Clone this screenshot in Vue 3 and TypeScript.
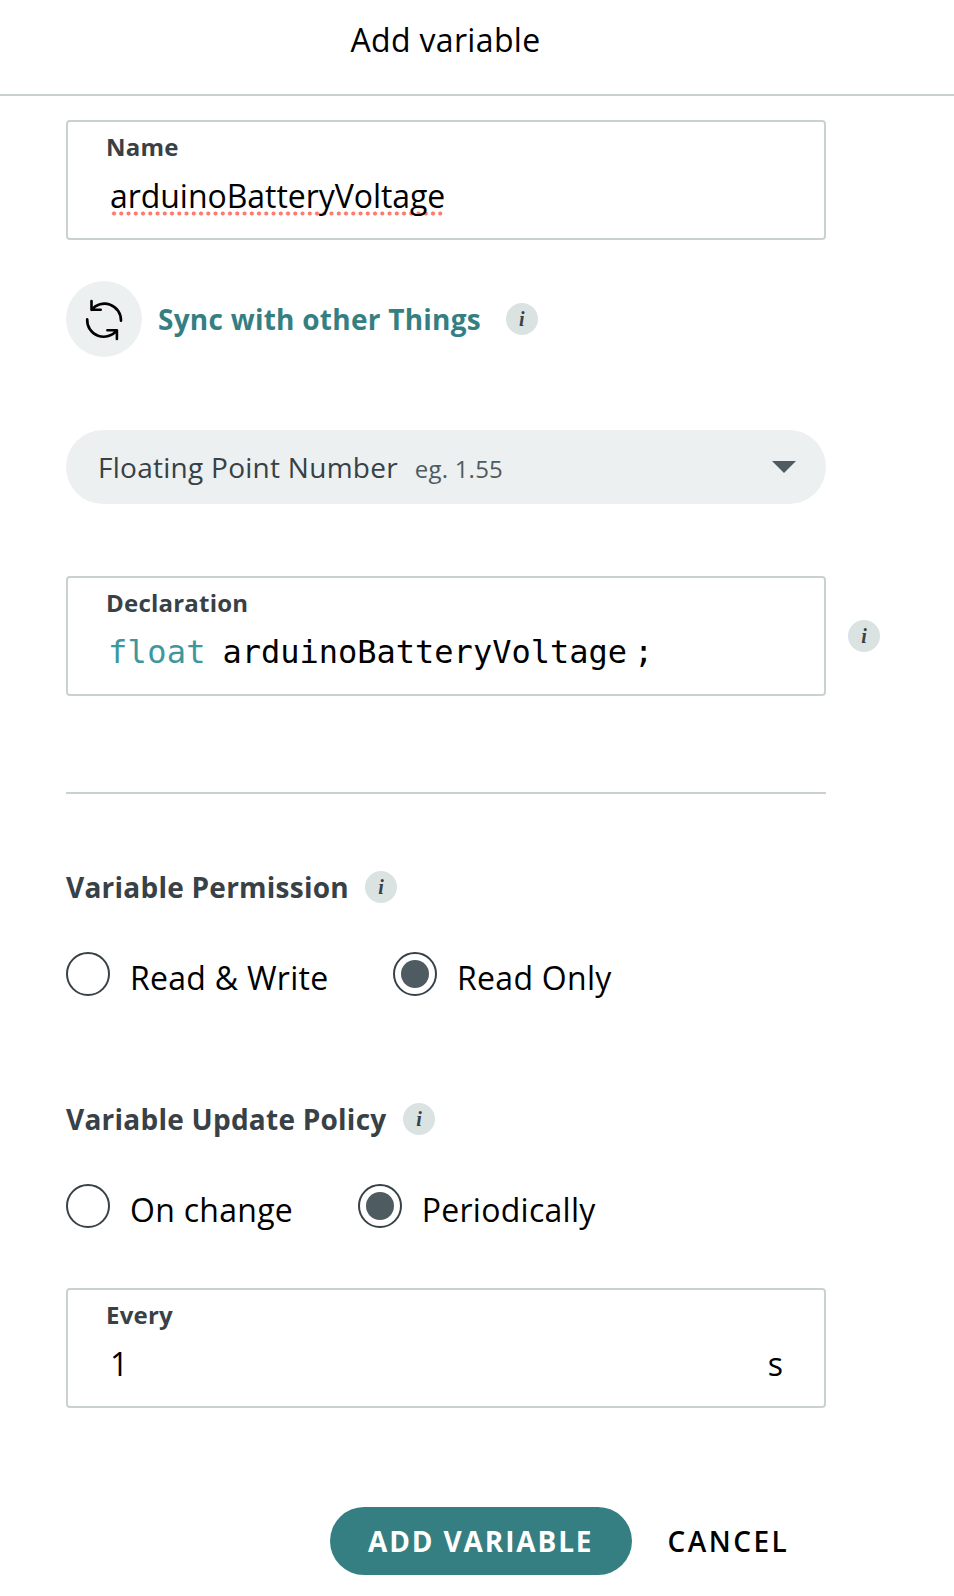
<script setup lang="ts">
import { ref } from 'vue'

interface Option {
  value: string
  label: string
}

const name = ref('arduinoBatteryVoltage')
const every = ref(1)
const permission = ref('ro')
const policy = ref('periodic')

const permissions: Option[] = [
  { value: 'rw', label: 'Read & Write' },
  { value: 'ro', label: 'Read Only' },
]
const policies: Option[] = [
  { value: 'change', label: 'On change' },
  { value: 'periodic', label: 'Periodically' },
]
</script>

<template>
  <div class="dialog">
    <header class="header">
      <h1 class="title">Add variable</h1>
    </header>

    <main class="body">
      <section class="field">
        <div class="field-label">Name</div>
        <div class="field-row">
          <span class="value misspelled">{{ name }}</span>
        </div>
      </section>

      <div class="sync">
        <span class="sync-icon">
          <svg width="76" height="76" viewBox="-38 -38 76 76" fill="none" stroke="#000" stroke-width="2.6" stroke-linecap="round" stroke-linejoin="round">
            <path d="M-12.5 -18V-9.2H-3.3M-12.5 -9.2A16.6 16.6 0 0 1 17 1.8" />
            <path d="M-16.8 .2A16.6 16.6 0 0 0 12.9 11.3M3.4 11.2H12.9V20" />
          </svg>
        </span>
        <a class="sync-link">Sync with other Things</a>
        <span class="info">i</span>
      </div>

      <div class="select">
        <span class="select-text">Floating Point Number</span>
        <span class="select-hint">eg. 1.55</span>
        <svg class="caret" width="24" height="12" viewBox="0 0 24 12"><path d="M0 0H24L12 12Z" fill="#4e5b61" /></svg>
      </div>

      <div class="declaration">
        <section class="field">
          <div class="field-label">Declaration</div>
          <div class="field-row code">
            <span class="type">float</span><span class="ident">{{ name }}</span><span class="semi">;</span>
          </div>
        </section>
        <span class="info">i</span>
      </div>

      <hr class="divider" />

      <div class="heading">
        <h2 class="heading-text">Variable Permission</h2>
        <span class="info">i</span>
      </div>
      <div class="radios">
        <label v-for="o in permissions" :key="o.value" class="radio" @click="permission = o.value">
          <span class="ring"><span v-if="permission === o.value" class="dot"></span></span>
          <span class="radio-label">{{ o.label }}</span>
        </label>
      </div>

      <div class="heading policy">
        <h2 class="heading-text">Variable Update Policy</h2>
        <span class="info">i</span>
      </div>
      <div class="radios">
        <label v-for="o in policies" :key="o.value" class="radio" @click="policy = o.value">
          <span class="ring"><span v-if="policy === o.value" class="dot"></span></span>
          <span class="radio-label">{{ o.label }}</span>
        </label>
      </div>

      <section class="field every">
        <div class="field-label">Every</div>
        <div class="field-row">
          <span class="value">{{ every }}</span>
          <span class="unit">s</span>
        </div>
      </section>
    </main>

    <footer class="actions">
      <button class="primary" type="button">ADD VARIABLE</button>
      <button class="cancel" type="button">CANCEL</button>
    </footer>
  </div>
</template>

<style>
body {
  margin: 0;
  background: #fff;
}
</style>

<style scoped>
.dialog {
  box-sizing: border-box;
  width: 954px;
  height: 1596px;
  overflow: hidden;
  background: #fff;
  color: #000;
  font-family: "Open Sans", "Noto Sans", sans-serif;
}
.header {
  box-sizing: border-box;
  height: 96px;
  padding-right: 63px;
  border-bottom: 2px solid #c9d2d2;
  text-align: center;
}
.title {
  margin: 0;
  font-size: 32px;
  font-weight: 400;
  line-height: 80px;
  letter-spacing: 0.33px;
}
.body {
  width: 760px;
  padding: 24px 0 0 66px;
}
.field {
  box-sizing: border-box;
  width: 760px;
  height: 120px;
  padding: 9px 41px 0 38px;
  border: 2px solid #c9d2d1;
  border-radius: 4px;
}
.field-label {
  color: #374146;
  font-size: 24px;
  font-weight: 700;
  line-height: 32px;
  letter-spacing: 0.22px;
}
.field-row {
  display: flex;
  justify-content: space-between;
  margin-top: 11px;
  padding-left: 4px;
  font-size: 32px;
  line-height: 44px;
}
.value {
  display: block;
}
.misspelled {
  letter-spacing: -0.05px;
  background: radial-gradient(circle, #ff7b6c 1.7px, transparent 2.5px) 0.4px 35.9px / 7.26px 7.26px repeat-x;
}
.code {
  justify-content: flex-start;
  padding-left: 2px;
  font-family: "DejaVu Sans Mono", monospace;
}
.type {
  color: #3f979e;
  letter-spacing: 0.3px;
}
.ident {
  margin-left: 16.6px;
}
.semi {
  margin-left: 7px;
}
.info {
  display: block;
  flex: none;
  width: 32px;
  height: 32px;
  border-radius: 50%;
  background: #dae3e2;
  color: #374146;
  font: italic 700 20px/33px "Liberation Serif", serif;
  text-align: center;
}
.sync {
  display: flex;
  align-items: center;
  height: 76px;
  margin-top: 41px;
}
.sync-icon {
  width: 76px;
  height: 76px;
  border-radius: 50%;
  background: #ecf0f1;
}
.sync-icon svg {
  display: block;
}
.sync-link {
  margin: 0 24.9px 0 16px;
  color: #357f83;
  font-size: 28px;
  font-weight: 700;
  line-height: 38px;
  letter-spacing: 0.25px;
}
.select {
  box-sizing: border-box;
  display: flex;
  align-items: baseline;
  height: 74px;
  margin-top: 73px;
  padding: 0 30px 0 32px;
  border-radius: 37px;
  background: #ecf0f1;
  line-height: 74px;
}
.select-text {
  color: #374146;
  font-size: 28px;
  letter-spacing: 0.27px;
}
.select-hint {
  margin-left: 16.8px;
  color: #4e5b61;
  font-size: 24px;
  letter-spacing: 0.22px;
}
.caret {
  align-self: center;
  margin-left: auto;
}
.declaration {
  display: flex;
  width: 814px;
  margin-top: 72px;
}
.declaration .field {
  flex: none;
}
.declaration .info {
  margin: 44px 0 0 22px;
}
.divider {
  height: 2px;
  margin: 96px 0 77px;
  border: 0;
  background: #c9d2d1;
}
.heading {
  display: flex;
  align-items: center;
  gap: 16px;
  height: 32px;
}
.heading-text {
  margin: 0;
  color: #374146;
  font-size: 28px;
  font-weight: 700;
  line-height: 32px;
  letter-spacing: 0.24px;
}
.policy {
  gap: 16.6px;
  margin-top: 107px;
}
.radios {
  display: flex;
  gap: 64.6px;
  height: 44px;
  margin-top: 49px;
}
.radio {
  display: flex;
  gap: 20px;
}
.ring {
  box-sizing: border-box;
  display: flex;
  align-items: center;
  justify-content: center;
  width: 44px;
  height: 44px;
  border: 2px solid #374146;
  border-radius: 50%;
}
.dot {
  width: 28px;
  height: 28px;
  border-radius: 50%;
  background: #4e5b61;
}
.radio-label {
  padding-top: 4px;
  font-size: 32px;
  line-height: 44px;
  letter-spacing: 0.28px;
  white-space: nowrap;
}
.every {
  margin-top: 60px;
}
.actions {
  display: flex;
  align-items: center;
  height: 68px;
  margin-top: 99px;
  padding-left: 330px;
}
.primary,
.cancel {
  border: 0;
  font-family: inherit;
  font-size: 28px;
  line-height: 68px;
  white-space: nowrap;
}
.primary {
  width: 302px;
  height: 68px;
  padding: 0 0 0 38px;
  border-radius: 34px;
  background: #357f83;
  color: #fff;
  font-weight: 700;
  letter-spacing: 1.87px;
  text-align: left;
}
.cancel {
  margin-left: 35.5px;
  padding: 0;
  background: none;
  color: #000;
  font-weight: 600;
  letter-spacing: 2.5px;
}
</style>
